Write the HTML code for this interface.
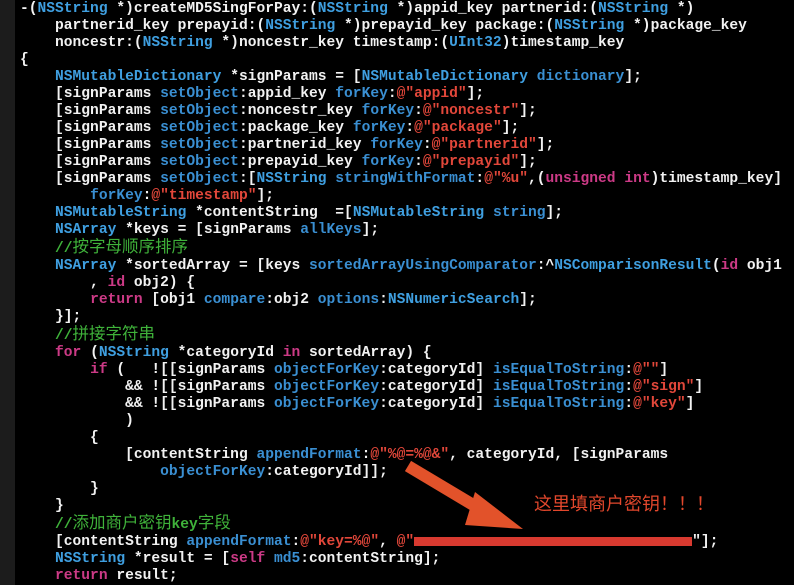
<!DOCTYPE html>
<html><head><meta charset="utf-8"><style>
html,body{margin:0;padding:0;background:#000;width:794px;height:585px;overflow:hidden}
pre{margin:0;padding:1px 0 0 20px;font-family:"Liberation Mono","Noto Sans CJK SC",monospace;font-size:14.6px;line-height:17px;color:#f2f2f2;font-weight:bold;white-space:pre}
.t{color:#3f9fe0}.m{color:#3a8fd2}.s{color:#e2473a}.k{color:#cc3a86}.c{color:#3fb23a}
.z{font-size:16.5px;line-height:17px;font-weight:normal}
.g{position:absolute;left:0;top:0;width:15px;height:585px;background:#1c1c1c}
.r{display:inline-block;height:9px;width:278px;background:#d83a30;vertical-align:middle}
</style></head><body>
<div class="g"></div>
<pre>-(<span class="t">NSString</span> *)createMD5SingForPay:(<span class="t">NSString</span> *)appid_key partnerid:(<span class="t">NSString</span> *)
    partnerid_key prepayid:(<span class="t">NSString</span> *)prepayid_key package:(<span class="t">NSString</span> *)package_key
    noncestr:(<span class="t">NSString</span> *)noncestr_key timestamp:(<span class="t">UInt32</span>)timestamp_key
{
    <span class="t">NSMutableDictionary</span> *signParams = [<span class="t">NSMutableDictionary</span> <span class="m">dictionary</span>];
    [signParams <span class="m">setObject</span>:appid_key <span class="m">forKey</span>:<span class="s">@"appid"</span>];
    [signParams <span class="m">setObject</span>:noncestr_key <span class="m">forKey</span>:<span class="s">@"noncestr"</span>];
    [signParams <span class="m">setObject</span>:package_key <span class="m">forKey</span>:<span class="s">@"package"</span>];
    [signParams <span class="m">setObject</span>:partnerid_key <span class="m">forKey</span>:<span class="s">@"partnerid"</span>];
    [signParams <span class="m">setObject</span>:prepayid_key <span class="m">forKey</span>:<span class="s">@"prepayid"</span>];
    [signParams <span class="m">setObject</span>:[<span class="t">NSString</span> <span class="m">stringWithFormat</span>:<span class="s">@"%u"</span>,(<span class="k">unsigned int</span>)timestamp_key]
        <span class="m">forKey</span>:<span class="s">@"timestamp"</span>];
    <span class="t">NSMutableString</span> *contentString  =[<span class="t">NSMutableString</span> <span class="m">string</span>];
    <span class="t">NSArray</span> *keys = [signParams <span class="m">allKeys</span>];
    <span class="c">//<span class="z">按字母顺序排序</span></span>
    <span class="t">NSArray</span> *sortedArray = [keys <span class="m">sortedArrayUsingComparator</span>:^<span class="t">NSComparisonResult</span>(<span class="k">id</span> obj1
        , <span class="k">id</span> obj2) {
        <span class="k">return</span> [obj1 <span class="m">compare</span>:obj2 <span class="m">options</span>:<span class="t">NSNumericSearch</span>];
    }];
    <span class="c">//<span class="z">拼接字符串</span></span>
    <span class="k">for</span> (<span class="t">NSString</span> *categoryId <span class="k">in</span> sortedArray) {
        <span class="k">if</span> (   ![[signParams <span class="m">objectForKey</span>:categoryId] <span class="m">isEqualToString</span>:<span class="s">@""</span>]
            &amp;&amp; ![[signParams <span class="m">objectForKey</span>:categoryId] <span class="m">isEqualToString</span>:<span class="s">@"sign"</span>]
            &amp;&amp; ![[signParams <span class="m">objectForKey</span>:categoryId] <span class="m">isEqualToString</span>:<span class="s">@"key"</span>]
            )
        {
            [contentString <span class="m">appendFormat</span>:<span class="s">@"%@=%@&amp;"</span>, categoryId, [signParams
                <span class="m">objectForKey</span>:categoryId]];
        }
    }
    <span class="c">//<span class="z">添加商户密钥</span>key<span class="z">字段</span></span>
    [contentString <span class="m">appendFormat</span>:<span class="s">@"key=%@"</span>, <span class="s">@"</span><span class="r"></span>"];
    <span class="t">NSString</span> *result = [<span class="k">self</span> <span class="m">md5</span>:contentString];
    <span class="k">return</span> result;</pre>
<div style="position:absolute;left:534px;top:492px;font-family:'Noto Sans CJK SC',sans-serif;font-size:18px;color:#e2472c;line-height:22px">这里填商户密钥！！！</div>
<svg style="position:absolute;left:0;top:0" width="794" height="585">
<line x1="408" y1="466" x2="490" y2="515" stroke="#e2522a" stroke-width="12"/>
<polygon points="475,492 523,529 465,525" fill="#e2522a"/>
</svg>
</body></html>
